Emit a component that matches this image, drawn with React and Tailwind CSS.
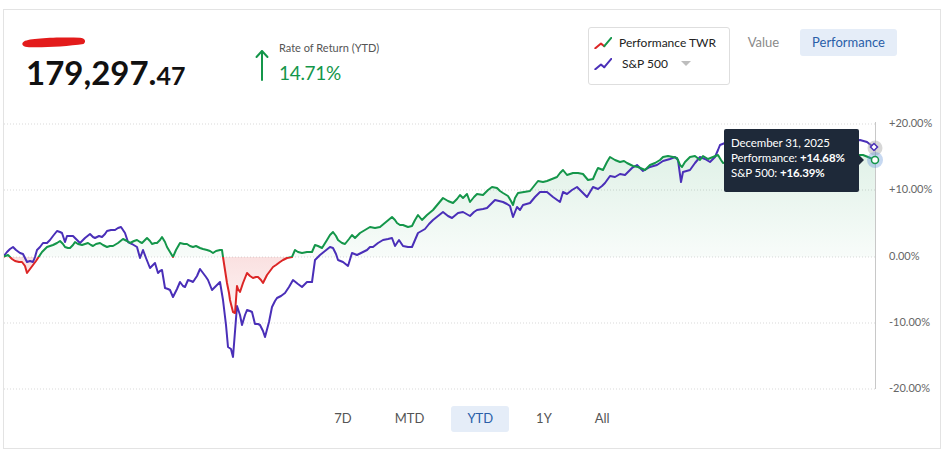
import React from "react";

const perf = [[3,257],[8,255],[12,259],[15,261],[19,262],[22,262],[25,266],[27,273],[30,269],[33,265],[36,261],[38,258],[42,252],[47,247],[50,246],[53,245],[57,243],[60,241],[63,244],[65,247],[68,248],[70,248],[73,245],[75,242],[78,244],[82,245],[85,244],[88,243],[91,245],[93,246],[96,244],[100,243],[103,245],[107,247],[110,246],[113,246],[118,243],[123,239],[127,241],[130,243],[134,241],[137,240],[140,242],[142,243],[145,240],[147,238],[150,241],[152,244],[155,243],[157,243],[160,240],[162,237],[165,242],[167,247],[170,252],[173,257],[176,250],[180,243],[184,244],[187,244],[190,246],[193,247],[196,246],[200,248],[203,249],[207,250],[210,251],[213,253],[216,251],[220,250],[222,250],[223,257],[225,270],[227,283],[229,293],[230,300],[232,308],[233,312],[235,313],[237,286],[238,289],[240,292],[243,283],[247,273],[250,276],[253,278],[256,277],[258,277],[261,280],[263,283],[265,279],[267,275],[270,271],[273,267],[276,265],[280,262],[283,260],[287,258],[292,257],[295,250],[298,252],[302,253],[307,252],[312,252],[315,245],[318,246],[322,248],[327,240],[330,235],[333,232],[336,236],[338,240],[342,243],[345,244],[349,239],[352,235],[355,238],[360,233],[365,230],[370,227],[375,228],[380,227],[386,222],[392,217],[395,220],[397,223],[400,225],[403,225],[408,227],[412,226],[415,220],[418,215],[422,220],[427,215],[433,210],[438,204],[443,198],[448,201],[453,203],[457,199],[460,195],[463,198],[467,194],[470,202],[474,197],[477,194],[483,195],[488,190],[492,187],[497,188],[500,191],[503,193],[508,196],[511,201],[513,205],[515,198],[518,193],[524,192],[530,191],[534,186],[538,181],[543,182],[547,181],[552,179],[557,177],[560,173],[563,170],[567,175],[573,173],[578,173],[583,174],[588,180],[593,179],[596,172],[598,168],[603,170],[607,162],[610,157],[615,160],[620,162],[624,161],[627,163],[633,166],[638,167],[645,170],[650,165],[655,163],[660,160],[663,157],[668,156],[673,157],[677,158],[680,165],[682,167],[685,162],[690,157],[695,156],[700,160],[703,156],[708,159],[713,157],[718,155],[721,160],[723,163],[728,162],[735,160],[742,161],[750,158],[758,159],[765,156],[772,158],[780,155],[790,157],[800,154],[810,156],[820,155],[830,157],[840,154],[850,156],[858,155],[863,155],[868,157],[875,160]];

const spx = [[3,257],[7,252],[10,249],[13,247],[16,250],[20,253],[23,254],[27,262],[30,261],[33,262],[35,257],[37,250],[40,247],[43,243],[47,243],[50,240],[53,236],[57,231],[60,232],[62,233],[65,242],[67,236],[70,236],[73,236],[77,240],[80,243],[85,238],[90,234],[93,237],[95,238],[99,236],[102,237],[105,234],[107,231],[111,230],[115,230],[118,228],[121,227],[123,230],[125,233],[128,242],[132,244],[137,247],[140,258],[143,250],[146,258],[150,268],[153,265],[155,263],[158,273],[160,271],[162,270],[165,288],[168,289],[170,290],[173,297],[177,289],[180,282],[183,286],[185,287],[188,280],[191,281],[193,282],[197,276],[200,269],[203,273],[206,277],[208,280],[212,290],[216,286],[220,282],[223,300],[226,325],[228,347],[231,349],[233,357],[237,306],[240,315],[242,325],[245,315],[247,310],[250,311],[252,312],[255,324],[258,324],[260,325],[263,331],[265,337],[269,322],[272,307],[275,301],[277,298],[281,296],[285,293],[289,287],[293,280],[298,284],[302,287],[305,284],[307,282],[312,282],[315,260],[318,257],[320,255],[325,251],[330,247],[333,248],[336,254],[338,260],[343,262],[348,266],[352,253],[357,255],[363,252],[367,250],[370,247],[373,247],[378,243],[383,240],[388,239],[392,238],[395,246],[399,240],[403,246],[408,247],[412,247],[415,240],[418,233],[425,229],[429,224],[433,220],[438,216],[443,212],[448,216],[452,218],[458,213],[463,212],[470,216],[474,212],[477,210],[483,209],[487,208],[491,204],[495,200],[499,201],[503,202],[507,204],[510,206],[513,217],[517,207],[520,210],[523,205],[530,203],[535,197],[540,192],[547,192],[553,197],[560,202],[563,192],[567,194],[572,190],[577,187],[582,192],[587,197],[593,187],[598,189],[602,186],[605,183],[610,176],[615,177],[620,174],[625,175],[632,168],[637,165],[643,171],[650,167],[657,165],[663,161],[670,159],[675,157],[678,160],[681,182],[683,172],[690,170],[695,163],[700,157],[705,159],[710,162],[715,157],[718,150],[720,145],[725,143],[735,144],[745,141],[755,143],[765,140],[775,142],[785,139],[795,141],[805,140],[815,141],[825,139],[835,141],[845,140],[855,141],[860,140],[867,142],[872,146],[875,149]];

const pts = (a) => a.map((p) => p.join(",")).join(" ");
const area = pts([[3, 257], ...perf, [875, 257]]);

const GREEN = "#14964a";
const RED = "#dc2626";
const PURPLE = "#4a2fb8";

function Chart() {
  const grid = [
    [124, "+20.00%"],
    [190, "+10.00%"],
    [257, "0.00%"],
    [323, "-10.00%"],
    [389, "-20.00%"],
  ];
  return (
    <svg width="936" height="290" viewBox="4 110 936 290" className="block">
      <defs>
        <linearGradient id="gUp" x1="0" y1="124" x2="0" y2="257" gradientUnits="userSpaceOnUse">
          <stop offset="0" stopColor={GREEN} stopOpacity="0.16" />
          <stop offset="1" stopColor={GREEN} stopOpacity="0.03" />
        </linearGradient>
        <linearGradient id="gDn" x1="0" y1="257" x2="0" y2="315" gradientUnits="userSpaceOnUse">
          <stop offset="0" stopColor={RED} stopOpacity="0.14" />
          <stop offset="1" stopColor={RED} stopOpacity="0.05" />
        </linearGradient>
        <clipPath id="cUp">
          <rect x="0" y="0" width="1000" height="257" />
        </clipPath>
        <clipPath id="cDn">
          <rect x="0" y="257" width="1000" height="300" />
        </clipPath>
      </defs>
      {grid.map(([y]) => (
        <line key={y} x1="4" x2="876" y1={y} y2={y} stroke="#d9d9d9" strokeWidth="1" strokeDasharray="1 2" />
      ))}
      <line x1="875.5" x2="875.5" y1="122" y2="389" stroke="#c8c8c8" strokeWidth="1" />
      {grid.map(([y, t]) => (
        <text key={t} x="889" y={y} dominantBaseline="middle" fontSize="11" fill="#666" fontFamily="Lato, sans-serif">
          {t}
        </text>
      ))}
      <polygon points={area} fill="url(#gUp)" clipPath="url(#cUp)" />
      <polygon points={area} fill="url(#gDn)" clipPath="url(#cDn)" />
      <polyline points={pts(spx)} fill="none" stroke={PURPLE} strokeWidth="2" strokeLinejoin="round" />
      <polyline points={pts(perf)} fill="none" stroke={GREEN} strokeWidth="2" strokeLinejoin="round" clipPath="url(#cUp)" />
      <polyline points={pts(perf)} fill="none" stroke={RED} strokeWidth="2" strokeLinejoin="round" clipPath="url(#cDn)" />
      <circle cx="875" cy="148" r="7.5" fill="#9a9a9a" fillOpacity="0.4" />
      <rect x="871.5" y="144.5" width="5" height="5" fill="#fff" stroke={PURPLE} strokeWidth="1.5" transform="rotate(45 874 147)" />
      <circle cx="875" cy="160" r="8" fill="#5b8fd6" fillOpacity="0.35" />
      <circle cx="875" cy="160" r="3.5" fill="#fff" stroke={GREEN} strokeWidth="1.5" />
    </svg>
  );
}

function TrendIcon({ first, second }) {
  return (
    <svg width="18" height="12" viewBox="0 0 18 12" className="shrink-0">
      <path d="M1.3 11.3 L7 6.6 L10.3 9.2" fill="none" stroke={first} strokeWidth="2" strokeLinejoin="round" strokeLinecap="round" />
      <path d="M10.3 9.2 L17.3 0.9" fill="none" stroke={second} strokeWidth="2" strokeLinecap="round" />
    </svg>
  );
}

export default function App() {
  return (
    <div className="w-[948px] h-[456px] bg-white pt-[9px] pl-[3px] overflow-hidden">
      <div className="relative w-[938px] h-[440px] border border-[#e3e3e3] flex flex-col font-['Lato',sans-serif]">
        {/* header */}
        <div className="flex h-[100px] shrink-0">
          <div className="ml-[17px] w-[234px] pt-[26px]">
            <svg width="66" height="13" viewBox="0 0 66 13" className="block">
              <path d="M3 5.5 C9 2 38 1.2 59 1.8 C64 2 65.5 5.5 62.5 8 C46 10.5 17 12 6 11 C1 10.3 0 7.5 3 5.5 Z" fill="#e31b1b" />
            </svg>
            <div className="mt-[7px] ml-[5px] flex items-baseline text-[#111] font-bold">
              <span className="text-[33px] leading-none">179,297.</span>
              <span className="text-[25px] leading-none">47</span>
            </div>
          </div>
          <div className="flex items-start pt-[31px]">
            <svg width="14" height="32" viewBox="0 0 14 32" className="mt-[8px] shrink-0">
              <path d="M7 31 V2 M1.5 8 L7 2 L12.5 8" fill="none" stroke={GREEN} strokeWidth="2" strokeLinecap="round" strokeLinejoin="round" />
            </svg>
            <div className="ml-[10px]">
              <div className="text-[11px] leading-[14px] text-[#555]">Rate of Return (YTD)</div>
              <div className="mt-[8px] text-[19px] leading-none text-[#14964a] tracking-[-0.3px]">14.71%</div>
            </div>
          </div>
          <div className="ml-auto mr-[43px] mt-[17px] flex items-start">
            <div className="w-[142px] h-[58px] border border-[#dedede] rounded-[3px] pl-[5px] pt-[4px] text-[12px] text-[#222]">
              <div className="h-[21px] flex items-center">
                <TrendIcon first={RED} second={GREEN} />
                <span className="ml-[7px]">Performance TWR</span>
              </div>
              <div className="h-[21px] flex items-center">
                <TrendIcon first={PURPLE} second={PURPLE} />
                <span className="ml-[10px]">S&amp;P 500</span>
                <span className="ml-[13px] w-0 h-0 border-x-[5px] border-x-transparent border-t-[5px] border-t-[#bdbdbd]" />
              </div>
            </div>
            <div className="ml-[6px] mt-[2px] w-[55px] h-[27px] flex items-center justify-center text-[13px] text-[#8a8a8a]">
              Value
            </div>
            <div className="ml-[9px] mt-[2px] w-[97px] h-[27px] flex items-center justify-center rounded-[3px] bg-[#e5edf8] text-[13px] text-[#2a5ea8]">
              Performance
            </div>
          </div>
        </div>

        {/* chart */}
        <div className="h-[290px] shrink-0">
          <Chart />
        </div>

        {/* tooltip */}
        <div className="absolute left-[720px] top-[119px] w-[135px] h-[63px] bg-[#1e2939] rounded-[2px] pl-[7px] pt-[6px] text-white text-[11.5px] leading-[15px] whitespace-nowrap tracking-[-0.1px]">
          <div>December 31, 2025</div>
          <div>
            Performance: <span className="font-bold">+14.68%</span>
          </div>
          <div>
            S&amp;P 500: <span className="font-bold">+16.39%</span>
          </div>
          <span className="absolute right-[-5px] top-[26px] w-0 h-0 border-y-[5px] border-y-transparent border-l-[5px] border-l-[#1e2939]" />
        </div>

        {/* tabs */}
        <div className="mt-[6px] flex justify-center gap-[11px] text-[13px] text-[#555]">
          {["7D", "MTD", "YTD", "1Y", "All"].map((t) => (
            <div
              key={t}
              className={
                t === "YTD"
                  ? "h-[26px] px-[16px] flex items-center rounded-[3px] bg-[#e5edf8] text-[#2a5ea8]"
                  : "h-[26px] px-[16px] flex items-center"
              }
            >
              {t}
            </div>
          ))}
        </div>
      </div>
    </div>
  );
}
